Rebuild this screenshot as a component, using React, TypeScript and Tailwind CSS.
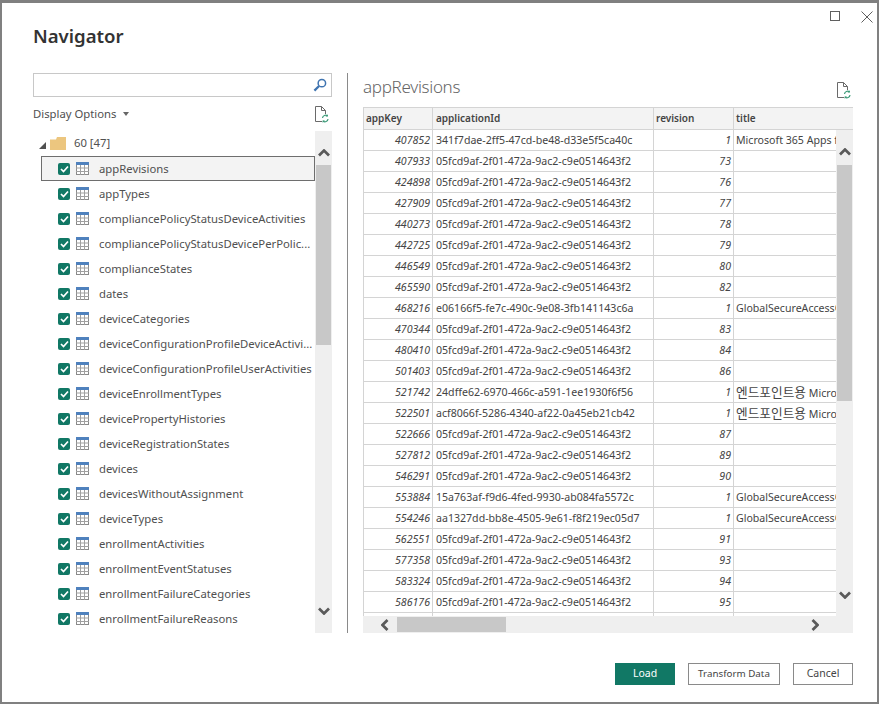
import React from 'react';

const tables = [
  'appRevisions',
  'appTypes',
  'compliancePolicyStatusDeviceActivities',
  'compliancePolicyStatusDevicePerPolic...',
  'complianceStates',
  'dates',
  'deviceCategories',
  'deviceConfigurationProfileDeviceActivi...',
  'deviceConfigurationProfileUserActivities',
  'deviceEnrollmentTypes',
  'devicePropertyHistories',
  'deviceRegistrationStates',
  'devices',
  'devicesWithoutAssignment',
  'deviceTypes',
  'enrollmentActivities',
  'enrollmentEventStatuses',
  'enrollmentFailureCategories',
  'enrollmentFailureReasons',
];

const appId = '05fcd9af-2f01-472a-9ac2-c9e0514643f2';
const secure = 'GlobalSecureAccessClient';
const korean = (
  <span>
    <span className="text-[12.7px]">엔드포인트용</span> Microsoft
  </span>
);

const rows: [string, string, string, React.ReactNode][] = [
  ['407852', '341f7dae-2ff5-47cd-be48-d33e5f5ca40c', '1', 'Microsoft 365 Apps for'],
  ['407933', appId, '73', ''],
  ['424898', appId, '76', ''],
  ['427909', appId, '77', ''],
  ['440273', appId, '78', ''],
  ['442725', appId, '79', ''],
  ['446549', appId, '80', ''],
  ['465590', appId, '82', ''],
  ['468216', 'e06166f5-fe7c-490c-9e08-3fb141143c6a', '1', secure],
  ['470344', appId, '83', ''],
  ['480410', appId, '84', ''],
  ['501403', appId, '86', ''],
  ['521742', '24dffe62-6970-466c-a591-1ee1930f6f56', '1', korean],
  ['522501', 'acf8066f-5286-4340-af22-0a45eb21cb42', '1', korean],
  ['522666', appId, '87', ''],
  ['527812', appId, '89', ''],
  ['546291', appId, '90', ''],
  ['553884', '15a763af-f9d6-4fed-9930-ab084fa5572c', '1', secure],
  ['554246', 'aa1327dd-bb8e-4505-9e61-f8f219ec05d7', '1', secure],
  ['562551', appId, '91', ''],
  ['577358', appId, '93', ''],
  ['583324', appId, '94', ''],
  ['586176', appId, '95', ''],
  ['', '', '', ''],
];

const Chevron = ({ dir }: { dir: 'up' | 'down' | 'left' | 'right' }) => {
  const points = {
    up: '1,6.5 6,1.5 11,6.5',
    down: '1,1.5 6,6.5 11,1.5',
    left: '6.5,1 1.5,6 6.5,11',
    right: '1.5,1 6.5,6 1.5,11',
  }[dir];
  const vertical = dir === 'up' || dir === 'down';
  return (
    <svg width={vertical ? 12 : 8} height={vertical ? 8 : 12} className="shrink-0">
      <polyline points={points} fill="none" stroke="#5a5a5a" strokeWidth="2.7" />
    </svg>
  );
};

const RefreshDocIcon = () => (
  <svg width="15" height="17" viewBox="0 0 15 17" className="shrink-0">
    <path d="M8 15.5H1.5V.5H7.5L11.5 4.5V8M7.5.5V4.5H11.5" fill="none" stroke="#6a6a6a" />
    <path d="M8.5 12a3 3 0 0 1 5-2M14 13a3 3 0 0 1-5 2" fill="none" stroke="#3c9a78" strokeWidth="1.2" />
    <path d="M13.9 8.2v2.4h-2.4zM8.6 16.8v-2.4H11z" fill="#3c9a78" />
  </svg>
);

const TableIcon = () => (
  <svg width="13" height="13" viewBox="0 0 13 13" className="shrink-0">
    <rect x="0.5" y="0.5" width="12" height="12" fill="#fff" stroke="#8a8a8a" />
    <rect x="0" y="0" width="13" height="3" fill="#4f81bd" />
    <path d="M0 6h13M0 9.5h13M4.5 3v10M8.5 3v10" stroke="#a0a0a0" />
  </svg>
);

const CheckBox = () => (
  <span className="flex h-3 w-3 shrink-0 items-center justify-center rounded-[2px] bg-[#117865]">
    <svg width="9" height="8" viewBox="0 0 9 8">
      <polyline points="1,4 3.5,6.5 8,1.5" fill="none" stroke="#fff" strokeWidth="1.7" />
    </svg>
  </span>
);

const TreeRow = ({ name, selected }: { name: string; selected: boolean }) => (
  <div
    className={`ml-2 flex h-[25px] items-center gap-[6px] border pl-4 ${
      selected ? 'border-[#6e6e6e] bg-[#f3f3f3]' : 'border-transparent'
    }`}
  >
    <CheckBox />
    <TableIcon />
    <span className="ml-[4px] pt-px whitespace-nowrap text-[11.3px] text-[#505050]">{name}</span>
  </div>
);

const LeftScrollbar = () => (
  <div className="flex w-[17px] shrink-0 flex-col items-center bg-[#efefef] pt-[18px] pb-[18px]">
    <Chevron dir="up" />
    <div className="mt-2 h-[180px] w-[15px] bg-[#c8c8c8]" />
    <div className="flex-1" />
    <Chevron dir="down" />
  </div>
);

const RightScrollbar = () => (
  <div className="flex w-[17px] shrink-0 flex-col items-center bg-[#efefef] pt-[18px] pb-[17px]">
    <Chevron dir="up" />
    <div className="mt-[9px] h-[236px] w-[15px] bg-[#c8c8c8]" />
    <div className="flex-1" />
    <Chevron dir="down" />
  </div>
);

export default function App() {
  return (
    <div className="flex h-[704px] w-[879px] flex-col border-2 border-t-[3px] border-[#808080] bg-white font-['Noto_Sans','Noto_Sans_CJK_KR',sans-serif]">
      <div className="flex h-[19px] items-start justify-end gap-[21px] pt-[8px] pr-[4px]">
        <div className="h-[10px] w-[10px] border border-[#5f5f5f]" />
        <svg width="12" height="12" viewBox="0 0 12 12">
          <path d="M.5.5l11 11M11.5.5l-11 11" stroke="#5f5f5f" />
        </svg>
      </div>

      <h1 className="ml-[31px] h-7 text-[18.6px] leading-7 font-semibold text-[#333333]">Navigator</h1>

      <div className="mt-[23px] flex h-[560px]">
        <div className="ml-[31px] flex w-[299px] flex-col">
          <div className="flex h-6 items-center justify-end border border-[#c8c8c8] pr-1">
            <svg width="14" height="14" viewBox="0 0 15 15">
              <circle cx="9.5" cy="5.5" r="4" fill="none" stroke="#3f74b0" strokeWidth="1.6" />
              <path d="M6.5 8.5L1.5 13.5" stroke="#3f74b0" strokeWidth="2.4" />
            </svg>
          </div>
          <div className="flex h-[34px] items-center justify-between pr-[3px]">
            <div className="flex items-center gap-[7px] text-[11.3px] text-[#505050]">
              Display Options
              <span className="h-0 w-0 border-x-[3.5px] border-t-[4px] border-x-transparent border-t-[#666666]" />
            </div>
            <RefreshDocIcon />
          </div>
          <div className="flex h-[502px]">
            <div className="flex-1 overflow-hidden">
              <div className="flex h-[25px] items-center pl-[6px]">
                <span className="mt-[3px] h-0 w-0 border-b-[7px] border-l-[7px] border-b-[#505050] border-l-transparent" />
                <svg width="16" height="13" viewBox="0 0 16 13" className="ml-[4px]">
                  <path d="M0 2.5h6L7 0h9v13H0z" fill="#ecc67f" />
                </svg>
                <span className="ml-2 text-[11.3px] text-[#505050]">60 [47]</span>
              </div>
              {tables.map((name, i) => (
                <TreeRow key={name} name={name} selected={i === 0} />
              ))}
            </div>
            <LeftScrollbar />
          </div>
        </div>

        <div className="ml-[15px] w-px bg-[#8a8a8a]" />

        <div className="ml-[15px] flex w-[490px] flex-col">
          <div className="flex h-[34px] items-center justify-between pr-[2px]">
            <span className="mb-[7px] text-[17px] font-light tracking-[-0.3px] text-[#666666]">appRevisions</span>
            <RefreshDocIcon />
          </div>

          <div className="flex h-[23px] border-y border-l border-[#d4d4d4] bg-[#f3f3f3] text-[10px] font-semibold text-[#444444]">
            <div className="flex w-[69px] items-center border-r border-[#d4d4d4] pl-[2px]">appKey</div>
            <div className="flex w-[221px] items-center border-r border-[#d4d4d4] pl-[3px]">applicationId</div>
            <div className="flex w-[80px] items-center border-r border-[#d4d4d4] pl-[2px]">revision</div>
            <div className="flex flex-1 items-center pl-[2px]">title</div>
          </div>

          <div className="flex h-[486px]">
            <div className="w-[473px] overflow-hidden border-l border-[#d4d4d4] text-[10.6px] text-[#444444]">
              {rows.map((row, i) => (
                <div key={i} className="flex h-[21px] shrink-0 border-b border-[#d4d4d4]">
                  <div className="flex w-[69px] items-center justify-end border-r border-[#d4d4d4] pt-px pr-[2px] italic">
                    {row[0]}
                  </div>
                  <div className="flex w-[221px] items-center border-r border-[#d4d4d4] pt-px pl-[3px] whitespace-nowrap">
                    {row[1]}
                  </div>
                  <div className="flex w-[80px] items-center justify-end border-r border-[#d4d4d4] pt-px pr-[2px] italic">
                    {row[2]}
                  </div>
                  <div className="flex flex-1 items-center overflow-hidden pt-px pl-[2px] whitespace-nowrap">{row[3]}</div>
                </div>
              ))}
            </div>
            <RightScrollbar />
          </div>

          <div className="flex h-[17px] items-center bg-[#efefef] pl-[18px] pr-[34px]">
            <Chevron dir="left" />
            <div className="ml-2 h-[15px] w-[109px] bg-[#c8c8c8]" />
            <div className="flex-1" />
            <Chevron dir="right" />
          </div>
        </div>
      </div>

      <div className="mt-[30px] mr-6 flex justify-end gap-[13px] text-[10.5px]">
        <button className="h-[22px] w-[60px] bg-[#117865] text-white">Load</button>
        <button className="h-[22px] w-[92px] border border-[#8a8a8a] text-[9.8px] text-[#444444]">Transform Data</button>
        <button className="h-[22px] w-[60px] border border-[#8a8a8a] text-[#444444]">Cancel</button>
      </div>
    </div>
  );
}
